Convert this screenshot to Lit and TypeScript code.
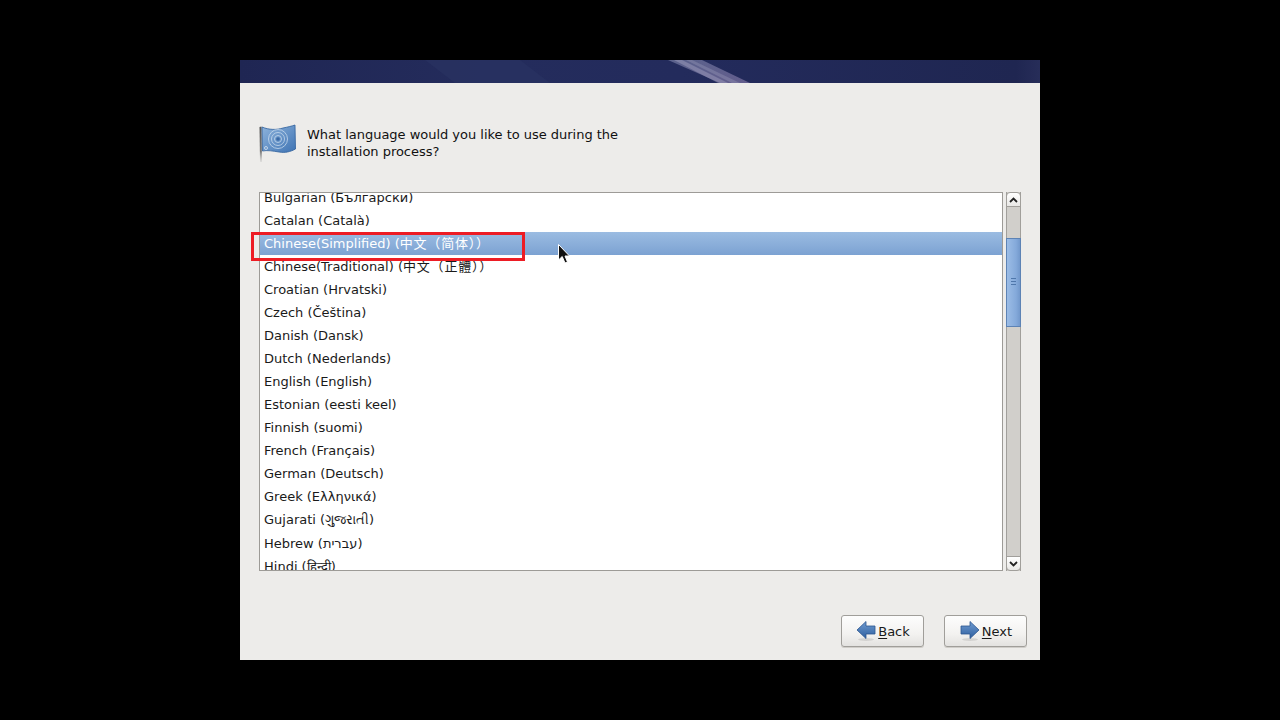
import { LitElement, html, css, svg } from "lit";
import { customElement } from "lit/decorators.js";

const ROWS: { t: string; cjk?: string; h?: number; sel?: boolean }[] = [
  { t: "Bulgarian (Български)" },
  { t: "Catalan (Català)" },
  { t: "Chinese(Simplified) (", cjk: "中文（简体））", sel: true },
  { t: "Chinese(Traditional) (", cjk: "中文（正體））" },
  { t: "Croatian (Hrvatski)" },
  { t: "Czech (Čeština)" },
  { t: "Danish (Dansk)" },
  { t: "Dutch (Nederlands)" },
  { t: "English (English)" },
  { t: "Estonian (eesti keel)" },
  { t: "Finnish (suomi)" },
  { t: "French (Français)" },
  { t: "German (Deutsch)" },
  { t: "Greek (Ελληνικά)" },
  { t: "Gujarati (ગુજરાતી)", h: 24 },
  { t: "Hebrew (עברית)" },
  { t: "Hindi (हिन्दी)" },
];

const flag = svg`<svg width="40" height="40" viewBox="0 0 40 40">
  <defs>
    <linearGradient id="fl" x1="0" y1="0" x2="1" y2="1"><stop offset="0" stop-color="#8fb4dc"/><stop offset="1" stop-color="#3f74b4"/></linearGradient>
    <linearGradient id="pole" x1="0" y1="0" x2="0" y2="1"><stop offset="0" stop-color="#555"/><stop offset=".7" stop-color="#777"/><stop offset="1" stop-color="#bbb" stop-opacity=".3"/></linearGradient>
  </defs>
  <path d="M2.500 3 L4.500 2.500 L5 38 L3 38Z" fill="url(#pole)"/>
  <path d="M5 3 C12 6 20 6 26 4 C31 3 35 2 38 1 L38.5 25 C33 28 28 29 22 28 C16 27 10 26 5.500 27Z" fill="url(#fl)" stroke="#2f5f9c" stroke-width=".8"/>
  <g fill="none" stroke="#d3e2f2" stroke-width=".9" opacity=".8"><circle cx="21" cy="15" r="9.500"/><circle cx="21" cy="15" r="6.500"/><circle cx="21" cy="15" r="3.500"/></g>
  <circle cx="21" cy="15" r="1.800" fill="#3a6aa6"/>
  <circle cx="9" cy="24" r="1.500" fill="none" stroke="#e6eef7" stroke-width=".7"/>
</svg>`;

const backIcon = svg`<svg width="20" height="22" viewBox="0 0 20 22">
  <defs><linearGradient id="ar" x1="0" y1="0" x2="0" y2="1"><stop offset="0" stop-color="#6f9bd0"/><stop offset="1" stop-color="#2f5f9f"/></linearGradient></defs>
  <ellipse cx="10" cy="19.500" rx="8" ry="1.500" fill="#000" opacity=".1"/>
  <path d="M1 10 L10 1.500 V6 H19 V14 H10 V18.500Z" fill="url(#ar)" stroke="#2b5690" stroke-width=".8"/>
</svg>`;
const nextIcon = svg`<svg width="20" height="22" viewBox="0 0 20 22">
  <defs><linearGradient id="ar2" x1="0" y1="0" x2="0" y2="1"><stop offset="0" stop-color="#6f9bd0"/><stop offset="1" stop-color="#2f5f9f"/></linearGradient></defs>
  <ellipse cx="10" cy="19.500" rx="8" ry="1.500" fill="#000" opacity=".1"/>
  <path d="M19 10 L10 1.500 V6 H1 V14 H10 V18.500Z" fill="url(#ar2)" stroke="#2b5690" stroke-width=".8"/>
</svg>`;

@customElement("app-root")
export class AppRoot extends LitElement {
  static styles = css`
    :host { display: block; width: 1280px; height: 720px; background: #000; overflow: hidden; position: relative;
      font-family: "DejaVu Sans", "Noto Sans CJK SC", sans-serif; font-size: 13px; color: #1a1a1a; }
    .stage { height: 720px; display: flex; align-items: center; justify-content: center; }
    .win { width: 800px; height: 600px; background: #edecea; display: flex; flex-direction: column; }
    .banner { height: 23px; flex: none; display: block; }
    .body { flex: 1; display: flex; flex-direction: column; padding: 41px 13px 13px 19px; min-height: 0; }
    .ask { display: flex; height: 68px; align-items: flex-start; gap: 10px; flex: none; }
    .ask .txt { color: #111; line-height: 17px; margin-top: 2px; width: 330px; letter-spacing: -0.02px; }
    .flag { margin-left: -2px; }
    .listrow { display: flex; height: 379px; flex: none; gap: 3px; margin-right: 6px; }
    .list { width: 744px; box-sizing: border-box; flex: none; border: 1px solid #9d9b97; background: #fff; overflow: hidden; }
    .inner { margin-top: -7px; }
    .row { height: 23px; line-height: 23px; padding-left: 4px; white-space: nowrap; }
    .row.tall { height: 24px; }
    .row.sel { background: linear-gradient(#9bbce2, #7ca2d2); color: #fff; }
    .cjk { letter-spacing: 0.8px; }
    .sb { width: 15px; flex: none; display: flex; flex-direction: column; background: #d1cfcb; box-sizing: border-box; border-left: 1px solid #a19f9b; border-right: 1px solid #a19f9b; }
    .sbtn { height: 15px; flex: none; box-sizing: border-box; margin: 0 -1px; background: linear-gradient(#fff, #e9e8e6); border: 1px solid #a19f9b; display: flex; align-items: center; justify-content: center; }
    .sbtn.up { border-radius: 4px 4px 0 0; }
    .sbtn.down { border-radius: 0 0 4px 4px; }
    .track { flex: 1; display: flex; flex-direction: column; }
    .gap { height: 31px; flex: none; }
    .thumb { height: 89px; flex: none; margin: 0 -1px; padding-bottom: 2px; box-sizing: border-box; border: 1px solid #5d83b5; background: linear-gradient(90deg, #9cbde6, #84a9da 70%, #7399cc); display: flex; align-items: center; justify-content: center; }
    .grip { width: 5px; height: 7px; border-top: 1px solid #4f77ab; border-bottom: 1px solid #4f77ab; box-sizing: border-box; }
    .grip::after { content: ""; display: block; height: 1px; background: #4f77ab; margin-top: 2px; }
    .btns { display: flex; justify-content: flex-end; gap: 20px; margin-top: 44px; flex: none; }
    .btn { width: 83px; height: 32px; box-sizing: border-box; border: 1px solid #a09e9a; border-radius: 3px; background: linear-gradient(#fdfdfd, #f3f2f0 60%, #e3e2e0); display: flex; align-items: center; justify-content: center; gap: 2px; color: #1a1a1a; font-size: 13px; box-shadow: 0 1px 0 #cfcdc9; }
    .btn svg { margin-left: 1px; }
    .btn u { text-underline-offset: 2px; }
    .mark { position: absolute; left: 251px; top: 232px; width: 274px; height: 29px; box-sizing: border-box; border: 3px solid #ed1c24; }
    .cursor { position: absolute; left: 557px; top: 243px; display: block; }
  `;

  render() {
    return html`<div class="stage">
        <div class="win">
          <svg class="banner" width="800" height="23" viewBox="0 0 800 23">
            <defs>
              <linearGradient id="bn" x1="0" y1="0" x2="1" y2="0">
                <stop offset="0" stop-color="#1f2653"/><stop offset=".3" stop-color="#242c5c"/>
                <stop offset=".55" stop-color="#232b5c"/><stop offset=".97" stop-color="#1f2651"/><stop offset="1" stop-color="#272d59"/>
              </linearGradient>
              <linearGradient id="st" x1="0" y1="0" x2="1" y2="1">
                <stop offset="0" stop-color="#7f86ac"/><stop offset="1" stop-color="#8d7fae"/>
              </linearGradient>
            </defs>
            <rect width="800" height="23" fill="url(#bn)"/>
            <polygon points="185,0 280,0 310,23 215,23" fill="#2a3362" opacity=".6"/>
            <polygon points="428,0 462,0 510,23 480,23" fill="url(#st)" opacity=".6"/>
            <polygon points="434,0 442,0 488,23 478,23" fill="#b9b6d0" opacity=".35"/>
            <polygon points="446,0 452,0 500,23 492,23" fill="#b9b6d0" opacity=".25"/>
          </svg>
          <div class="body">
            <div class="ask">
              <div class="flag">${flag}</div>
              <div class="txt">What language would you like to use during the installation process?</div>
            </div>
            <div class="listrow">
              <div class="list">
                <div class="inner">
                  ${ROWS.map(
                    (r) => html`<div class="row ${r.sel ? "sel" : ""} ${r.h ? "tall" : ""}">${r.t}${r.cjk ? html`<span class="cjk">${r.cjk}</span>` : ""}</div>`
                  )}
                </div>
              </div>
              <div class="sb">
                <div class="sbtn up"><svg width="9" height="6" viewBox="0 0 9 6"><path d="M1 5 L4.500 1.500 L8 5" fill="none" stroke="#222" stroke-width="1.800"/></svg></div>
                <div class="track">
                  <div class="gap"></div>
                  <div class="thumb"><div class="grip"></div></div>
                </div>
                <div class="sbtn down"><svg width="9" height="6" viewBox="0 0 9 6"><path d="M1 1 L4.500 4.500 L8 1" fill="none" stroke="#222" stroke-width="1.800"/></svg></div>
              </div>
            </div>
            <div class="btns">
              <div class="btn">${backIcon}<span><u>B</u>ack</span></div>
              <div class="btn">${nextIcon}<span><u>N</u>ext</span></div>
            </div>
          </div>
        </div>
      </div>
      <div class="mark"></div>
      <svg class="cursor" width="16" height="23" viewBox="0 0 16 23">
        <path d="M1.500 1.500 L1.500 17 L5.200 13.500 L8 20 L10.500 19 L8 13 L12.500 13Z" fill="#111" stroke="#fff" stroke-width="1"/>
      </svg>`;
  }
}
